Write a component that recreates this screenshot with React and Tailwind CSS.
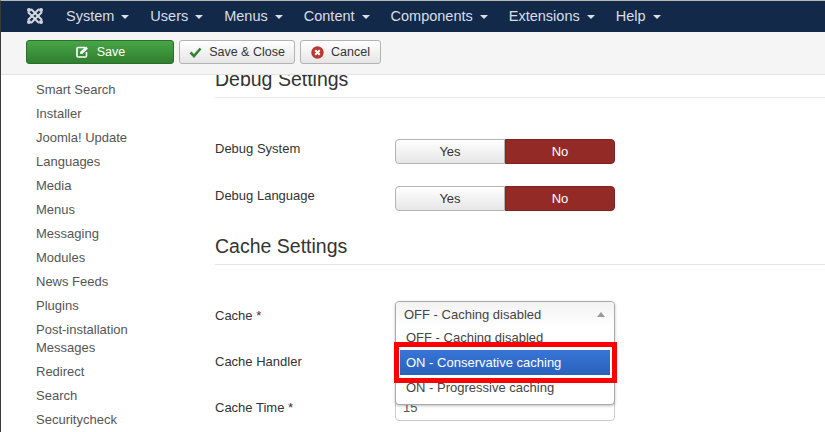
import React from "react";

const font = "font-['Liberation_Sans',Arial,sans-serif]";

function Caret() {
  return <span className="ml-[7px] inline-block w-0 h-0 border-x-[4px] border-x-transparent border-t-[4px] border-t-[#d9dfe6] align-middle" />;
}

function Logo() {
  return (
    <svg width="18" height="18" viewBox="0 0 18 18" fill="none" stroke="#d3d8de" strokeWidth="2" strokeLinecap="round">
      <path d="M2.5 5.5 L12.5 15.5" />
      <path d="M5.5 2.5 L15.5 12.5" />
      <path d="M2.5 12.5 L12.5 2.5" />
      <path d="M5.5 15.5 L15.5 5.5" />
      <circle cx="3" cy="3" r="2" fill="#d3d8de" stroke="none" />
      <circle cx="15" cy="3" r="2" fill="#d3d8de" stroke="none" />
      <circle cx="3" cy="15" r="2" fill="#d3d8de" stroke="none" />
      <circle cx="15" cy="15" r="2" fill="#d3d8de" stroke="none" />
    </svg>
  );
}

const menus = ["System", "Users", "Menus", "Content", "Components", "Extensions", "Help"];
const side = ["Smart Search", "Installer", "Joomla! Update", "Languages", "Media", "Menus", "Messaging", "Modules", "News Feeds", "Plugins"];
const side2 = ["Redirect", "Search", "Securitycheck"];

function Toggle() {
  return (
    <div className="flex w-[220px] h-[25px] text-[13px] leading-[18px]">
      <div className="w-[110px] flex items-center justify-center rounded-l-[4px] border border-[#b3b3b3] bg-gradient-to-b from-white to-[#e6e6e6] text-[#333]">Yes</div>
      <div className="w-[110px] flex items-center justify-center rounded-r-[4px] border border-[#7f2320] bg-[#942a25] text-white">No</div>
    </div>
  );
}

function Row({ label, children, h, pad = "pt-[1px]" }) {
  return (
    <div className={`flex items-start ${h}`}>
      <div className={`w-[180px] text-[13px] leading-[18px] text-[#333] ${pad}`}>{label}</div>
      <div className="relative">{children}</div>
    </div>
  );
}

export default function App() {
  return (
    <div className={`${font} w-[825px] h-[432px] overflow-hidden flex flex-col bg-white border-l border-[#3a3a3a] border-t border-t-[#b9b9b4]`}>
      <nav className="h-[31px] shrink-0 bg-[#13294a] flex items-center">
        <div className="ml-[25px] w-[18px] flex mt-[-1px]"><Logo /></div>
        <ul className="ml-[22px] flex gap-[21px] text-[14.5px] text-[#d9dfe6]">
          {menus.map((m) => (
            <li key={m} className="whitespace-nowrap">{m}<Caret /></li>
          ))}
        </ul>
      </nav>
      <div className="h-[43px] shrink-0 bg-[#f5f5f5] border-b border-[#e3e3e3] flex items-start pt-[8px] pl-[25px] gap-[5px] text-[12.5px]">
        <button className="w-[148px] h-[24px] rounded-[3px] border border-[#2a6e2a] bg-gradient-to-b from-[#48a648] to-[#2f7f2f] text-white flex items-center justify-center gap-[8px]">
          <svg width="14" height="14" viewBox="0 0 14 14" fill="none" stroke="#fff">
            <path d="M10 2.5 H3 a1 1 0 0 0 -1 1 V11 a1 1 0 0 0 1 1 h7.5 a1 1 0 0 0 1 -1 V7" strokeWidth="1.6" />
            <path d="M5.5 6.5 L11 1.5 L13 3.5 L7.5 8.8 L5 9 Z" fill="#fff" stroke="none" />
          </svg>
          Save
        </button>
        <button className="w-[116px] h-[24px] rounded-[3px] border border-[#b3b3b3] bg-gradient-to-b from-white to-[#e6e6e6] text-[#333] flex items-center justify-center gap-[7px]">
          <svg width="13" height="12" viewBox="0 0 13 12" fill="none"><path d="M1.5 6.5 L5 10 L11.5 2.5" stroke="#378137" strokeWidth="2.6" /></svg>
          Save &amp; Close
        </button>
        <button className="w-[81px] h-[24px] rounded-[3px] border border-[#b3b3b3] bg-gradient-to-b from-white to-[#e6e6e6] text-[#333] flex items-center justify-center gap-[7px]">
          <svg width="13" height="13" viewBox="0 0 13 13"><circle cx="6.5" cy="6.5" r="6.2" fill="#bd362f" /><path d="M4.2 4.2 L8.8 8.8 M8.8 4.2 L4.2 8.8" stroke="#fff" strokeWidth="2" /></svg>
          Cancel
        </button>
      </div>
      <div className="flex flex-1 min-h-0 overflow-hidden">
        <aside className="w-[214px] shrink-0 pl-[35px] pt-[3px] text-[13px] leading-[18px] text-[#555]">
          {side.map((s) => <div key={s} className="h-[24px] flex items-center">{s}</div>)}
          <div className="py-[3px]">Post-installation<br />Messages</div>
          {side2.map((s) => <div key={s} className="h-[24px] flex items-center">{s}</div>)}
        </aside>
        <main className="w-[610px] shrink-0 text-[#333]">
          <h3 className="mt-[-8px] h-[31px] text-[19.5px] leading-[24px] text-[#333] border-b border-[#e5e5e5]">Debug Settings</h3>
          <div className="mt-[41px]">
            <Row label="Debug System" h="h-[47px]"><Toggle /></Row>
            <Row label="Debug Language" h="h-[47px]"><Toggle /></Row>
          </div>
          <h3 className="mt-[1px] h-[31px] text-[19.5px] leading-[24px] text-[#333] border-b border-[#e5e5e5]">Cache Settings</h3>
          <div className="mt-[37px]">
            <Row label="Cache *" h="h-[46px]" pad="pt-[5px]">
              <div className="w-[220px] h-[26px]" />
              <div className="absolute left-0 top-[-1px] w-[220px] h-[104px] z-10 rounded-[4px] border border-[#aaa] bg-white shadow-[0_1px_3px_rgba(0,0,0,0.25)] text-[13px] text-[#444]">
                <div className="h-[25px] flex items-center justify-between pl-[8px] pr-[9px] rounded-t-[4px] bg-gradient-to-b from-[#f2f2f2] to-white">
                  <span>OFF - Caching disabled</span>
                  <span className="w-0 h-0 border-x-[4px] border-x-transparent border-b-[5px] border-b-[#999]" />
                </div>
                <div className="px-[4px] mt-[-2px]">
                  <div className="h-[25px] flex items-center px-[6px] pt-[1px]">OFF - Caching disabled</div>
                  <div className="h-[25px] flex items-center px-[6px] text-white bg-gradient-to-b from-[#3875d7] to-[#2a62bc]">ON - Conservative caching</div>
                  <div className="h-[25px] flex items-center px-[6px]">ON - Progressive caching</div>
                </div>
              </div>
              <div className="absolute left-[-1px] top-[40px] w-[223px] h-[41px] z-20 border-[5px] border-[#f00]" />
            </Row>
            <Row label="Cache Handler" h="h-[46px]" pad="pt-[5px]"><div className="w-[220px] h-[26px]" /></Row>
            <Row label="Cache Time *" h="h-[46px]" pad="pt-[5px]">
              <div className="w-[220px] h-[26px] rounded-[4px] border border-[#ccc] text-[13px] text-[#555] pl-[7px] flex items-center mt-[1px]">15</div>
            </Row>
          </div>
        </main>
      </div>
    </div>
  );
}
